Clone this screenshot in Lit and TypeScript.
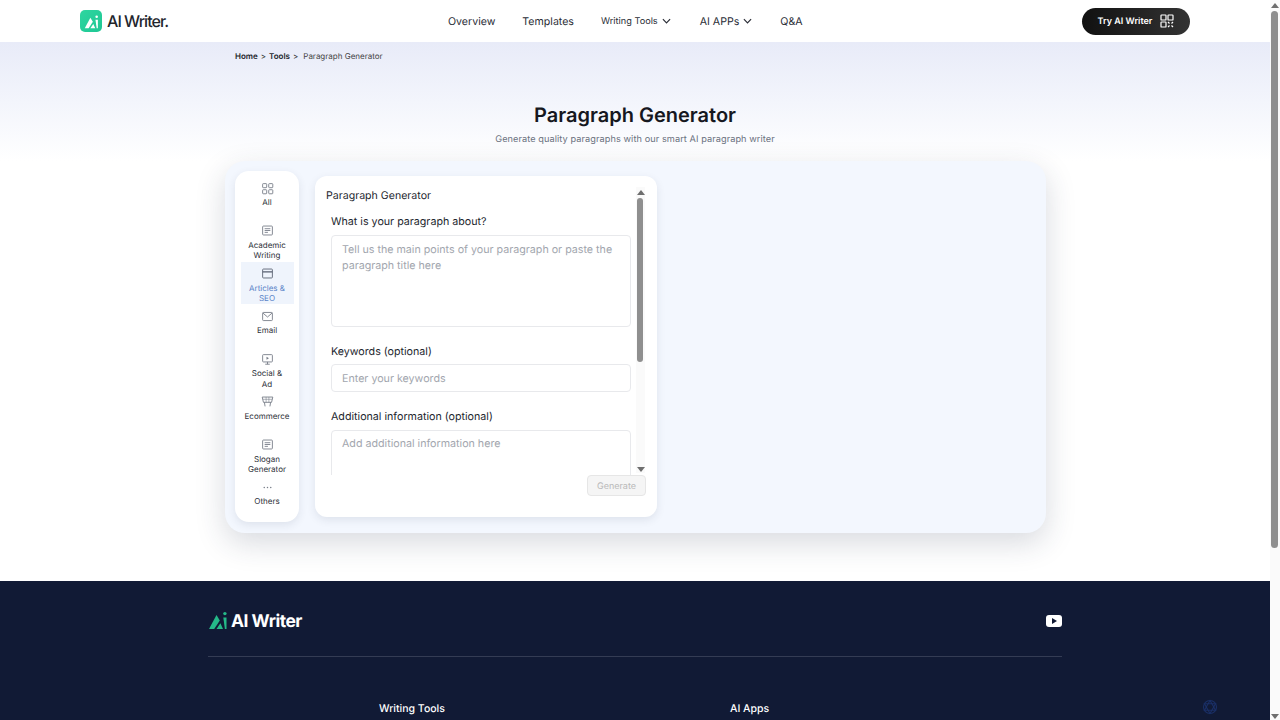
import { LitElement, html, css, svg } from 'lit';
import { customElement } from 'lit/decorators.js';

const ico = (body: unknown) => html`<svg class="ico" viewBox="0 0 16 16" fill="none" stroke="currentColor" stroke-width="1.1">${body}</svg>`;

const icons = {
  all: svg`<rect x="2" y="2" width="5" height="5" rx=".8"/><rect x="9.500" y="2" width="5" height="5" rx=".8"/><rect x="2" y="9.500" width="5" height="5" rx=".8"/><rect x="9.500" y="9.500" width="5" height="5" rx=".8"/>`,
  doc: svg`<rect x="2" y="2.500" width="12" height="11" rx="1"/><path d="M4.500 5.800h7M4.500 8h7M4.500 10.300h4"/>`,
  seo: svg`<rect x="2" y="2.500" width="12" height="11" rx="1"/><path d="M2 6h12" stroke-width="1.600"/>`,
  mail: svg`<rect x="2" y="3" width="12" height="10" rx="1"/><path d="M2.300 3.700 8 8.600l5.700-4.900"/>`,
  social: svg`<rect x="2" y="2" width="12" height="9" rx="1"/><path d="M8 11v2.800M5.200 13.800h5.600"/><path d="M6.800 4.700l3 1.800-3 1.800z" fill="currentColor" stroke="none"/>`,
  cart: svg`<path d="M1.500 2.500h13L13 9H3z"/><path d="M2.200 5.300h11.600M6.300 2.500V9M9.700 2.500V9" stroke-width=".7"/><path d="M4.200 9l.8 5M11.800 9l-.8 5"/>`,
  more: svg`<circle cx="4" cy="8" r=".9" fill="currentColor" stroke="none"/><circle cx="8" cy="8" r=".9" fill="currentColor" stroke="none"/><circle cx="12" cy="8" r=".9" fill="currentColor" stroke="none"/>`,
};

const categories = [
  { icon: icons.all, label: 'All' },
  { icon: icons.doc, label: 'Academic Writing' },
  { icon: icons.seo, label: 'Articles & SEO', active: true },
  { icon: icons.mail, label: 'Email' },
  { icon: icons.social, label: 'Social & Ad' },
  { icon: icons.cart, label: 'Ecommerce' },
  { icon: icons.doc, label: 'Slogan Generator' },
  { icon: icons.more, label: 'Others' },
];

const chevron = html`<svg class="chev" viewBox="0 0 10 6" fill="none" stroke="currentColor" stroke-width="1.3"><path d="M1 1l4 4 4-4"/></svg>`;

// the A + i mark, used in both logos
const mark = svg`<path d="M1 19 8.500 5l3.300 5.400L6.200 19z" fill="currentColor"/><path d="M8.500 19l3.900-5.800L15 19z" fill="currentColor"/><path d="M15.300 7.500h3.200V19h-1.600z" fill="currentColor"/><circle cx="16.900" cy="3.600" r="1.700" fill="currentColor"/>`;

@customElement('app-root')
export class AppRoot extends LitElement {
  static styles = css`
    :host {
      display: flex;
      height: 720px;
      overflow: hidden;
      font-family: Inter, 'Noto Sans', sans-serif;
      text-rendering: geometricPrecision;
      color: #1c1f2a;
      background: #fff;
      position: relative;
    }
    .page { width: 1270px; flex: none; display: flex; flex-direction: column; }

    header {
      height: 42px;
      flex: none;
      display: grid;
      grid-template-columns: 368px auto 1fr;
      align-items: center;
      padding: 0 80px;
    }
    .logo { display: flex; align-items: center; gap: 5px; }
    .logo-box {
      width: 22px; height: 22px; border-radius: 5px;
      background: linear-gradient(135deg, #2fd6a0, #1ec794);
      display: flex; align-items: center; justify-content: center;
      color: #fff;
    }
    .logo-box svg { width: 15px; height: 15px; }
    .logo-text { font-size: 16px; font-weight: 500; letter-spacing: -.95px; color: #22252c; }
    nav { display: flex; align-items: center; font-size: 10.600px; color: #2a2d36; }
    nav a { display: flex; align-items: center; gap: 4px; }
    nav a.sm { font-size: 9.200px; gap: 4px; }
    .chev { width: 9px; height: 6px; }
    .nav-1, .nav-2 { margin-right: 27px; }
    .nav-3 { margin-right: 29px; }
    .nav-4 { margin-right: 28px; }
    .try {
      justify-self: end;
      width: 108px; height: 27px; border-radius: 14px;
      background: linear-gradient(90deg, #111 0%, #333 100%);
      color: #fff;
      font-size: 9px; font-weight: 600;
      display: flex; align-items: center; justify-content: center; gap: 8px;
    }
    .try svg { width: 14px; height: 14px; }

    .hero {
      height: 119px;
      flex: none;
      background: linear-gradient(180deg, #e8ebf8 0%, #f3f5fc 50%, #fff 100%);
      padding: 0 235px;
      display: flex;
      flex-direction: column;
    }
    .crumbs { font-size: 8px; padding-top: 9px; line-height: 10px; color: #333; display: flex; gap: 3px; }
    .crumbs b { font-weight: 600; color: #1c1f2a; }
    .crumbs .cur { margin-left: 2px; color: #444; }
    h1 { margin: 42px 0 0; font-size: 20px; line-height: 24px; font-weight: 600; text-align: center; color: #16181f; }
    .sub { margin-top: 7px; font-size: 9.200px; line-height: 12px; letter-spacing: .07px; text-align: center; color: #6b7280; }

    .content { height: 420px; flex: none; padding-left: 225px; }
    .card {
      width: 821px; height: 372px;
      box-sizing: border-box;
      border-radius: 20px;
      background: #f3f7fe;
      box-shadow: 0 10px 30px rgba(40, 50, 80, .18);
      padding: 10px;
      display: flex;
      align-items: flex-start;
      gap: 16px;
    }
    .side {
      width: 64px; height: 351px;
      box-sizing: border-box;
      flex: none;
      background: #fff;
      border-radius: 14px;
      box-shadow: 0 3px 8px rgba(40, 50, 80, .1);
      padding: 5px 5px 5px 6px;
      display: flex;
      flex-direction: column;
    }
    .cat {
      flex: none;
      height: 42.750px;
      display: flex; flex-direction: column; align-items: center;
      box-sizing: border-box;
      padding: 5.500px 6.500px 0 5.500px;
      font-size: 8px; line-height: 10.600px;
      text-align: center;
      color: #2c2f38;
    }
    .cat .ico { width: 13px; height: 13px; color: #777d88; margin-bottom: 2.500px; flex: none; }
    .cat.active { background: #eff4fc; color: #5b84c8; }
    .cat.active .ico { color: #5a6272; }

    .panel {
      width: 342px; height: 341px;
      box-sizing: border-box;
      margin-top: 5px;
      flex: none;
      background: #fff;
      border-radius: 12px;
      box-shadow: 0 3px 8px rgba(40, 50, 80, .1);
      position: relative;
      padding: 13px 10px 0 11px;
    }
    .panel-title { font-size: 10.600px; line-height: 14px; color: #23262e; }
    .form { height: 261px; margin-top: 4px; overflow: hidden; padding: 7px 0 0 5px; width: 300px; }
    label { display: block; font-size: 10.700px; line-height: 14px; padding-top: 1px; margin-bottom: -1px; color: #23262e; }
    .field {
      width: 300px;
      box-sizing: border-box;
      border: 1px solid #e8e9ec;
      border-radius: 4px;
      padding: 6px 8px 5px 10px;
      margin: 7px 0 17px;
      font-size: 10.700px;
      line-height: 16px;
      color: #a2a6ae;
    }
    .f1 { height: 92px; }
    .f2 { height: 28px; margin-top: 6px; }
    .f3 { height: 80px; padding-top: 5px; }
    .gen {
      position: absolute;
      right: 11px; bottom: 21px;
      width: 59px; height: 21px;
      box-sizing: border-box;
      padding-top: 1px;
      border: 1px solid #e6e6e6;
      border-radius: 4px;
      background: #f5f5f5;
      color: #b9b9b9;
      font-size: 9px;
      display: flex; align-items: center; justify-content: center;
    }
    .bar {
      position: absolute;
      top: 11px; right: 12px;
      width: 9px; height: 286px;
      background: #fafafa;
    }
    .bar .thumb { position: absolute; left: 1px; top: 11px; width: 6px; height: 164px; border-radius: 3px; background: #8f8f8f; }
    .tri { position: absolute; left: 1px; width: 0; height: 0; border-left: 4px solid transparent; border-right: 4px solid transparent; }
    .tri.up { top: 3px; border-bottom: 5px solid #6e6e6e; }
    .tri.down { bottom: 1px; border-top: 5px solid #6e6e6e; }

    footer { flex: 1; background: #111a35; padding: 0 208px; color: #fff; }
    .foot-top {
      height: 76px;
      box-sizing: border-box;
      padding-top: 4px;
      display: flex; align-items: center; justify-content: space-between;
      border-bottom: 1px solid #343c54;
    }
    .foot-logo { display: flex; align-items: center; gap: 3px; margin-top: 1px; font-size: 17.500px; font-weight: 700; letter-spacing: -.5px; }
    .foot-logo svg { width: 20px; height: 20px; margin-top: -2px; color: #25b988; }
    .yt { width: 16px; height: 12px; border-radius: 3px; background: #fff; display: flex; align-items: center; justify-content: center; }
    .yt i { width: 0; height: 0; border-left: 5px solid #111a35; border-top: 3px solid transparent; border-bottom: 3px solid transparent; }
    .foot-cols { display: flex; padding: 45px 0 0 171px; font-size: 10.500px; line-height: 14px; font-weight: 500; }
    .foot-cols div { width: 351px; flex: none; }

    .sb { flex: 1; background: #fafafa; position: relative; }
    .sb .thumb { position: absolute; left: 1px; top: 11px; width: 7px; height: 537px; border-radius: 4px; background: #8f8f8f; }

    .wm { position: absolute; left: 1202px; top: 699px; width: 16px; height: 16px; color: #1a2f66; }
  `;

  render() {
    return html`
      <div class="page">
        <header>
          <div class="logo">
            <span class="logo-box"><svg viewBox="0 0 20 20">${mark}</svg></span>
            <span class="logo-text">AI Writer.</span>
          </div>
          <nav>
            <a class="nav-1">Overview</a>
            <a class="nav-2">Templates</a>
            <a class="sm nav-3">Writing Tools ${chevron}</a>
            <a class="nav-4">AI APPs ${chevron}</a>
            <a>Q&amp;A</a>
          </nav>
          <div class="try">
            Try AI Writer
            <svg viewBox="0 0 14 14" fill="none" stroke="currentColor" stroke-width="1.200">
              <rect x="1" y="1" width="5" height="5" rx=".6"/><rect x="8" y="1" width="5" height="5" rx=".6"/><rect x="1" y="8" width="5" height="5" rx=".6"/>
              <path d="M8 8l1.500 1.500M13 8l-1.500 1.500M8 13l1.500-1.500M13 13l-1.500-1.500"/>
            </svg>
          </div>
        </header>

        <section class="hero">
          <div class="crumbs"><b>Home</b><span>&gt;</span><b>Tools</b><span>&gt;</span><span class="cur">Paragraph Generator</span></div>
          <h1>Paragraph Generator</h1>
          <div class="sub">Generate quality paragraphs with our smart AI paragraph writer</div>
        </section>

        <section class="content">
          <div class="card">
            <div class="side">
              ${categories.map(
                (c) => html`<div class="cat ${c.active ? 'active' : ''}">${ico(c.icon)}<span>${c.label}</span></div>`
              )}
            </div>
            <div class="panel">
              <div class="panel-title">Paragraph Generator</div>
              <div class="form">
                <label>What is your paragraph about?</label>
                <div class="field f1">Tell us the main points of your paragraph or paste the paragraph title here</div>
                <label>Keywords (optional)</label>
                <div class="field f2">Enter your keywords</div>
                <label>Additional information (optional)</label>
                <div class="field f3">Add additional information here</div>
              </div>
              <div class="bar"><span class="tri up"></span><span class="thumb"></span><span class="tri down"></span></div>
              <div class="gen">Generate</div>
            </div>
          </div>
        </section>

        <footer>
          <div class="foot-top">
            <div class="foot-logo"><svg viewBox="0 0 20 20">${mark}</svg>AI Writer</div>
            <div class="yt"><i></i></div>
          </div>
          <div class="foot-cols"><div>Writing Tools</div><div>AI Apps</div></div>
        </footer>
      </div>
      <div class="sb"><span class="tri up"></span><span class="thumb"></span><span class="tri down"></span></div>
      <svg class="wm" viewBox="0 0 16 16" fill="none" stroke="currentColor" stroke-width="1.100">
        <circle cx="8" cy="8" r="6.500"/><path d="M8 1.500 13.600 11.200H2.400zM8 14.500 2.400 4.800h11.200z"/>
      </svg>
    `;
  }
}
